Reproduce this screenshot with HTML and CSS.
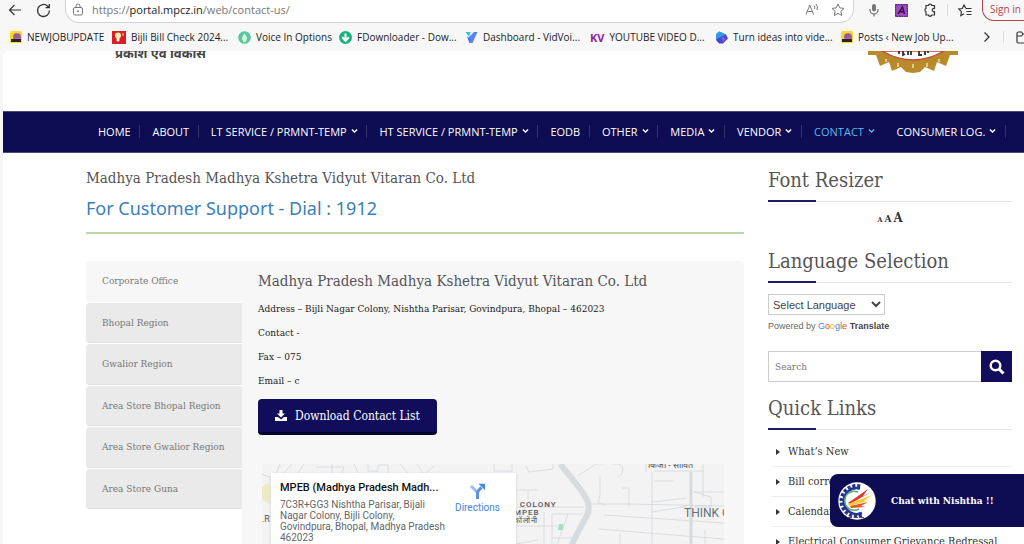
FILE: index.html
```html
<!DOCTYPE html>
<html lang="en">
<head>
<meta charset="utf-8">
<meta name="viewport" content="width=device-width, initial-scale=1">
<title>Contact Us</title>
<link rel="stylesheet" href="styles.css">
</head>
<body>
<svg class="sprite" aria-hidden="true">
  <symbol id="chev" viewBox="0 0 8 6"><path d="M1 1.2 4 4.2 7 1.2" fill="none" stroke="currentColor" stroke-width="1.6"/></symbol>
  <symbol id="jobs" viewBox="0 0 12 12"><rect width="12" height="12" rx="1.5" fill="#f2dc2a"/><path d="M3 5c0-2 2-3 4-3s4 1 4 3v3H3z" fill="#b06aa8"/><path d="M4 4h5M4 6h6" stroke="#7d4a88"/><path d="M1 8h10v3H1z" fill="#2b2418"/></symbol>
</svg>

<header class="browser">
  <div class="toolbar">
    <button class="tool" aria-label="Back"><svg width="14" height="14" viewBox="0 0 14 14"><path d="M13 7H1.500M6.500 2l-5 5 5 5" fill="none" stroke="#333" stroke-width="1.200"/></svg></button>
    <button class="tool" aria-label="Reload"><svg width="15" height="15" viewBox="0 0 15 15"><path d="M13.500 7.500a6 6 0 1 1-2-4.500l1.500 1.500M13.300 1v3.700H9.600" fill="none" stroke="#333" stroke-width="1.300"/></svg></button>
    <div class="address">
      <svg width="12" height="13" viewBox="0 0 12 13"><rect x="1.500" y="4.500" width="9" height="7.500" rx="1.500" fill="none" stroke="#777"/><path d="M4 4.500V3a2 2 0 0 1 4 0v1.500" fill="none" stroke="#777"/><circle cx="6" cy="8.200" r=".9" fill="#777"/></svg>
      <a class="url" href="#">https://<b>portal.mpcz.in</b>/web/contact-us/</a>
      <button class="tool" aria-label="Read aloud"><svg width="14" height="13" viewBox="0 0 14 13"><path d="M1 11.500 4.800 2l3.800 9.500M2.300 8.500h5M9 2.500q1.300 1.500.6 3.500M11 1q2.400 2.600.9 6" fill="none" stroke="#777"/></svg></button>
      <button class="tool" aria-label="Add to favorites"><svg width="14" height="14" viewBox="0 0 14 14"><path d="m7 1 1.800 3.900 4.200.5-3.100 2.900.8 4.200L7 10.400l-3.700 2.100.8-4.200L1 5.400l4.200-.5z" fill="none" stroke="#777"/></svg></button>
    </div>
    <div class="extensions">
      <button class="tool" aria-label="Microphone"><svg width="12" height="14" viewBox="0 0 12 14"><rect x="4" y="1" width="4" height="7.500" rx="2" fill="#777"/><path d="M2 6v1a4 4 0 0 0 8 0V6M6 11v2.500" fill="none" stroke="#777" stroke-width="1.300"/></svg></button>
      <button class="tool" aria-label="Font extension"><svg width="13" height="13" viewBox="0 0 13 13"><rect width="13" height="13" fill="#a24cc4"/><rect x=".7" y=".7" width="11.600" height="11.600" fill="none" stroke="#4b1768" stroke-dasharray="1.500 1"/><path d="m3 10 4.500-7L9.500 10M5 7.800h4" fill="none" stroke="#35104a" stroke-width="1.400"/></svg></button>
      <button class="tool" aria-label="Extensions"><svg width="14" height="14" viewBox="0 0 14 14"><path d="M3 2.500h2.500a1.700 1.700 0 0 1 3.300 0H11.500V5.500a1.700 1.700 0 1 0 0 3.200v3.300H8.800a1.700 1.700 0 0 1-3.300 0H3V8.700a1.700 1.700 0 0 1 0-3.200z" fill="none" stroke="#333" stroke-width="1.200"/></svg></button>
      <span class="rule"></span>
      <button class="tool" aria-label="Favorites"><svg width="14" height="13" viewBox="0 0 14 13"><path d="M8 4.500 6 .9 4.300 4.500.8 5l2.600 2.600-.6 4L6 9.800M8 4.500h5.500M8.500 7.500h5M8.500 10.500h5" fill="none" stroke="#333" stroke-width="1.100"/></svg></button>
      <button class="signin">Sign in</button>
    </div>
  </div>
  <nav class="bookmarks" aria-label="Bookmarks">
    <a href="#"><svg width="12" height="12"><use href="#jobs"/></svg>NEWJOBUPDATE</a>
    <a href="#"><svg width="14" height="13" viewBox="0 0 14 13"><rect width="14" height="13" fill="#d91e25"/><circle cx="6" cy="4.500" r="3" fill="#fff0a8"/><path d="M5 7h2v3H5zM11 2v3" fill="#fff" stroke="#fff" stroke-width=".8"/></svg>Bijli Bill Check 2024...</a>
    <a href="#"><svg width="13" height="13" viewBox="0 0 13 13"><circle cx="6.500" cy="6.500" r="6.300" fill="#58c6a2"/><path d="M6.500 2.500C8 4.500 9 5.500 9 7.500a2.500 2.500 0 0 1-5 0c0-2 1-3 2.500-5" fill="#d7f4e1"/><path d="M5 9h3v2H5z" fill="#f4e7a0"/></svg>Voice In Options</a>
    <a href="#"><svg width="13" height="13" viewBox="0 0 13 13"><circle cx="6.500" cy="6.500" r="6.500" fill="#19b27b"/><path d="M6.500 2.500v7M3.200 6.200l3.300 3.500 3.300-3.500" fill="none" stroke="#fff" stroke-width="2"/></svg>FDownloader - Dow...</a>
    <a href="#"><svg width="13" height="13" viewBox="0 0 13 13"><path d="M.5 1h5.200L4 5.500z" fill="#28c6d4"/><path d="M12.500 1H9L3 7l1.500 5h3z" fill="#5b83f1"/><path d="m2 5.500 3.500 2L4.500 12z" fill="#536be8"/></svg>Dashboard - VidVoi...</a>
    <a href="#"><span class="kv">KV</span>YOUTUBE VIDEO D...</a>
    <a href="#"><svg width="13" height="13" viewBox="0 0 13 13"><path d="m4 .5 7 3 2 4-5 5H4L1 9z" fill="#4c45cf"/><path d="M4 .5 1 3v5l5-2 5-2.500z" fill="#329be6"/><path d="m6 6 5 1-3 4z" fill="#7a60e2"/></svg>Turn ideas into vide...</a>
    <a href="#"><svg width="12" height="12"><use href="#jobs"/></svg>Posts ‹ New Job Up...</a>
    <div class="more">
      <button class="tool" aria-label="More bookmarks"><svg width="8" height="12" viewBox="0 0 8 12"><path d="m1.500 1.500 4.500 4.500-4.500 4.500" fill="none" stroke="#333" stroke-width="1.300"/></svg></button>
      <span class="rule"></span>
      <button class="tool" aria-label="Other favorites"><svg width="14" height="13" viewBox="0 0 14 13"><path d="M14 3H7L5.500 1H2.500Q1 1 1 2.500v8Q1 12 2.500 12H14M1 5h4.500L7 3" fill="none" stroke="#333" stroke-width="1.200"/></svg></button>
    </div>
  </nav>
</header>

<div class="page">
  <div class="masthead">
    <div class="tagline" lang="hi">प्रकाश एवं विकास</div>
    <svg class="emblem" width="90" height="72" viewBox="0 0 90 72">
      <path d="M0 50h90v4H82l-4 11-9-4-3 9-9-4-5 5-7 1-7-1-5-5-9 4-3-9-9 4-4-11H0z" fill="#b98a2c"/>
      <path d="M14 50Q45 68 76 50z" fill="#fff" stroke="#c14b35" stroke-width="1.300"/>
      <path d="M18 58v3M30 62v4M45 63v4M59 62v4M71 58v3" stroke="#f1dfae" stroke-width="1.500"/>
      <path d="M31 50v3M35 50v4l2-1M40 50v4M43 50v4M51 50v4h3M57 50v4M60 50v2" stroke="#333" stroke-width="1.800" fill="none"/>
    </svg>
  </div>

  <nav class="menu" aria-label="Main">
    <ul>
      <li><a href="#">HOME</a></li>
      <li><a href="#">ABOUT</a></li>
      <li><a href="#">LT SERVICE / PRMNT-TEMP<svg><use href="#chev"/></svg></a></li>
      <li><a href="#">HT SERVICE / PRMNT-TEMP<svg><use href="#chev"/></svg></a></li>
      <li><a href="#">EODB</a></li>
      <li><a href="#">OTHER<svg><use href="#chev"/></svg></a></li>
      <li><a href="#">MEDIA<svg><use href="#chev"/></svg></a></li>
      <li><a href="#">VENDOR<svg><use href="#chev"/></svg></a></li>
      <li class="active"><a href="#">CONTACT<svg><use href="#chev"/></svg></a></li>
      <li><a href="#">CONSUMER LOG.<svg><use href="#chev"/></svg></a></li>
    </ul>
  </nav>

  <div class="content">
    <main>
      <h1>Madhya Pradesh Madhya Kshetra Vidyut Vitaran Co. Ltd</h1>
      <p class="support"><a href="#">For Customer Support - Dial : 1912</a></p>
      <div class="offices">
        <div class="tabs" role="tablist">
          <button role="tab" aria-selected="true">Corporate Office</button>
          <button role="tab" aria-selected="false">Bhopal Region</button>
          <button role="tab" aria-selected="false">Gwalior Region</button>
          <button role="tab" aria-selected="false">Area Store Bhopal Region</button>
          <button role="tab" aria-selected="false">Area Store Gwalior Region</button>
          <button role="tab" aria-selected="false">Area Store Guna</button>
        </div>
        <section class="panel" role="tabpanel">
          <h2>Madhya Pradesh Madhya Kshetra Vidyut Vitaran Co. Ltd</h2>
          <p>Address – Bijli Nagar Colony, Nishtha Parisar, Govindpura, Bhopal – 462023</p>
          <p>Contact -</p>
          <p class="cut">Fax – 075</p>
          <p class="cut">Email – c</p>
          <button class="download"><svg width="12" height="11" viewBox="0 0 12 11"><path d="M4.500 0h3v3.500H10L6 7.500 2 3.500h2.500zM0 7h3l3 2.500L9 7h3v4H0z" fill="#fff"/></svg>Download Contact List</button>
          <div class="map">
            <svg class="streets" viewBox="0 0 462 100" preserveAspectRatio="xMinYMin slice">
              <rect width="462" height="100" fill="#f3f3f4"/>
              <path d="M0 23l6-4 5 7-3 14-8-4z" fill="#eeeac8"/>
              <path d="M0 10l12 5 6-15M22 9l8-9M42 0l-6 9M54 3h28l-2 6M70 0v9M92 0l4 9M106 0v7h10V1h10v8M138 0l8 9M155 0l6 9M172 2l-8 7M232 0v7h18V0M264 2l3 6 24-3V0M254 26h22M266 26v10M254 43h68M254 62h42M282 48v52M290 50v50M290 50h31M306 50l-18 50M290 74h22M254 80l22-4M325 40h40l97 2M342 51l120 8M336 65l126 10M358 70v30M316 12l18-12 22-1M338 13v18l-2 8 8 2M350 0q14-2 10 10l-4 3M384 0v8M390 8v92M390 48l36-6M390 38l35-4M432 28l17 5v10h-17M441 0v34M432 28h30M392 7h50M392 17h20M443 66v14M367 24v18M360 24h7M398 0v4" fill="none" stroke="#d9dcdf"/>
              <path d="M429 8v92" stroke="#d7dadd" stroke-width="3"/>
              <path d="M298 0q22 26 26 34 6 10-1 21-8 14-15 30l-9 18" fill="none" stroke="#d9dcdf" stroke-width="6"/>
              <path d="M297 60h4v6h-5z" fill="#a4dfc4"/>
            </svg>
            <span class="place road" lang="hi">किजा - सावित</span>
            <span class="place colony">S COLONY</span>
            <span class="place mpeb">MPEB<br><span lang="hi">कॉलोनी</span></span>
            <span class="place gas">THINK G</span>
            <span class="place edge">.R</span>
            <div class="card">
              <div class="where"><strong>MPEB (Madhya Pradesh Madh...</strong><address>7C3R+GG3 Nishtha Parisar, Bijali Nagar Colony, Bijli Colony, Govindpura, Bhopal, Madhya Pradesh 462023</address></div>
              <a class="directions" href="#"><svg width="16" height="16" viewBox="0 0 16 16"><path d="M1 3 7 9" fill="none" stroke="#9abcf0" stroke-width="3"/><path d="M7.500 16v-6q0-2 4-5.500" fill="none" stroke="#5b92e2" stroke-width="3"/><path d="M8.500.8H15v6.500z" fill="#4b88df"/></svg>Directions</a>
            </div>
          </div>
        </section>
      </div>
    </main>

    <aside>
      <h3>Font Resizer</h3>
      <div class="resizer"><a class="small" href="#">A</a> <a class="medium" href="#">A</a> <a class="large" href="#">A</a></div>
      <h3>Language Selection</h3>
      <select aria-label="Select Language"><option>Select Language</option></select>
      <div class="powered">Powered by <span class="google"><i>G</i><i>o</i><i>o</i><i>g</i><i>l</i><i>e</i></span> <b>Translate</b></div>
      <form class="search">
        <input type="search" placeholder="Search" aria-label="Search">
        <button type="button" aria-label="Submit search"><svg width="16" height="16" viewBox="0 0 16 16"><circle cx="6.500" cy="6.500" r="4.800" fill="none" stroke="#fff" stroke-width="2.400"/><path d="m10 10 4.500 4.500" stroke="#fff" stroke-width="3"/></svg></button>
      </form>
      <h3>Quick Links</h3>
      <ul class="links">
        <li><a href="#">What’s New</a></li>
        <li><a href="#">Bill correction</a></li>
        <li><a href="#">Calendar</a></li>
        <li><a href="#">Electrical Consumer Grievance Redressal</a></li>
      </ul>
    </aside>
  </div>
</div>

<button class="chat">
  <svg width="38" height="38" viewBox="0 0 38 38">
    <circle cx="19" cy="19" r="18.700" fill="#fff"/>
    <path d="M22 5A14.500 14.500 0 1 0 24 32.500" fill="none" stroke="#27358f" stroke-width="5" stroke-dasharray="3 1.600"/>
    <path d="M22 6.500A13 13 0 1 0 24 31" fill="none" stroke="#27358f" stroke-width="2.500"/>
    <path d="M20 10a9.500 9.500 0 1 0 1 17" fill="none" stroke="#55ad75" stroke-width="1.500"/>
    <path d="m10 21 20-14-5 7 8-4-21 12z" fill="#df382d"/>
    <path d="m10 22 24-9-8 6 7-1-21 6z" fill="#f1cd37"/>
    <path d="m12 24 18-4-7 4 5 1-15 1z" fill="#e0592f"/>
    <path d="M10 35.500h18" stroke="#555" stroke-dasharray="4 2"/>
  </svg>
  <span>Chat with Nishtha !!</span>
</button>
</body>
</html>
```
FILE: styles.css
```css
* { box-sizing: border-box; }
html, body { height: 100%; }
body {
  margin: 0;
  overflow: hidden;
  display: flex;
  flex-direction: column;
  background: #f7f7f8;
  color: #333;
  font-family: "DejaVu Serif Condensed", "DejaVu Serif", serif;
}
a { color: inherit; text-decoration: none; }
button { font: inherit; color: inherit; border: 0; padding: 0; background: none; }
h1, h2, h3, p, ul { margin: 0; padding: 0; font-weight: 400; }
ul { list-style: none; }
svg { flex: none; }
.sprite { position: absolute; width: 0; height: 0; }

/* Browser bars */
.browser { flex: none; font: 10px "Open Sans", sans-serif; color: #222; }
.toolbar { display: flex; height: 23px; padding-left: 8px; gap: 14px; }
.tool { display: flex; align-items: center; height: 20px; }
.address {
  flex: 1;
  display: flex;
  align-items: center;
  gap: 12px;
  height: 23px;
  padding: 0 8px 3px 6px;
  border: 1px solid #d2d2d4;
  border-top: 0;
  border-radius: 0 0 14px 14px;
  background: #fff;
}
.url { flex: 1; margin-left: -4px; font-size: 11px; color: #777; }
.url b { font-weight: 400; color: #222; }
.extensions { display: flex; gap: 15px; height: 20px; align-items: center; }
.extensions .rule { margin: 0 -5px; }
.rule { width: 1px; height: 12px; background: #ddd; }
.signin {
  height: 22px;
  width: 48px;
  margin: 0 -6px 0 -5px;
  padding: 0 8px 2px 7px;
  border: 1px solid #b8434c;
  border-top: 0;
  border-radius: 0 0 0 12px;
  color: #b8434c;
  white-space: nowrap;
}
.bookmarks {
  display: grid;
  grid-template-columns: 102px 126px 101px 126px 125px 125px 126px 135px 1fr;
  align-items: center;
  height: 28px;
  padding-left: 10px;
}
.bookmarks a { display: flex; align-items: center; gap: 5px; white-space: nowrap; }
.kv { color: #98209b; font-size: 11px; line-height: 13px; font-weight: 700; }
.more { display: flex; align-items: center; gap: 12px; justify-content: flex-end; overflow: hidden; margin-right: -6px; }

/* Web page */
.page {
  flex: 1;
  min-height: 0;
  overflow: hidden;
  margin-left: 3px;
  border-top-left-radius: 6px;
  background: #fff;
}
.masthead {
  display: flex;
  justify-content: space-between;
  align-items: flex-start;
  height: 60px;
  padding: 0 66px 0 112px;
  overflow: hidden;
}
.tagline { margin-top: -7px; font: 700 13px/18px "Noto Sans", sans-serif; color: #444; }
.emblem { margin-top: -50px; }
.menu { background: #0d0b52; border: 1px solid #4d4b78; border-width: 1px 0; padding: 0 18px 0 83px; }
.menu ul { display: flex; height: 40px; padding-bottom: 2px; align-items: center; }
.menu li { flex: auto; border-right: 1px solid #34336b; padding-left: 12px; }
.menu li.active { border-color: transparent; }
.menu a { display: flex; align-items: center; gap: 4px; font: 500 11px/13px "Open Sans", sans-serif; color: #fff; white-space: nowrap; }
.menu svg { width: 7px; height: 6px; }
.menu .active a { color: #5cb8ea; }

.content { display: grid; grid-template-columns: minmax(0, 1fr) 244px; gap: 24px; padding: 13px 12px 0 83px; }
h1, h2 { font-size: 15px; line-height: 24px; color: #555; white-space: nowrap; }
.support {
  margin-top: 4px;
  padding-bottom: 9px;
  border-bottom: 2px solid #bbd7a4;
  font: 18px/29px "Noto Sans", sans-serif;
  color: #3b80b9;
}
.offices { display: grid; grid-template-columns: 156px minmax(0, 1fr); align-items: start; margin-top: 27px; }
.tabs { display: grid; grid-auto-rows: 1fr; gap: 1px; min-height: 248px; }
.tabs button {
  padding: 0 16px;
  border-radius: 4px 0 0 4px;
  border-bottom: 1px solid #e2e2e2;
  background: #eaeaea;
  color: #777;
  font-size: 10px;
  text-align: left;
  white-space: nowrap;
}
.tabs [aria-selected="true"] { background: #f7f7f7; border-color: #f7f7f7; }
.panel { padding: 8px 16px 80px; background: #f7f7f7; border-radius: 0 4px 4px 0; }
.panel p { font-size: 10px; line-height: 16px; margin-top: 8px; color: #222; white-space: nowrap; }
.panel .cut { width: 43px; overflow: hidden; }
.download {
  display: flex;
  align-items: center;
  justify-content: center;
  gap: 8px;
  width: 179px;
  height: 36px;
  margin-top: 10px;
  border-radius: 4px;
  border-bottom: 3px solid #05042f;
  background: #110d5a;
  color: #fff;
  font-size: 12px;
}
.map { position: relative; margin: 29px 4px 0; height: 100px; overflow: hidden; font-family: Roboto, sans-serif; }
.streets { display: block; width: 100%; height: 100px; }
.place { position: absolute; color: #555; white-space: nowrap; }
.road { left: 386px; top: -6px; font-size: 9px; }
.colony, .mpeb { font-weight: 500; font-size: 8px; line-height: 8px; letter-spacing: 1px; }
.colony { left: 249px; top: 37px; }
.mpeb { left: 252px; top: 45px; }
.gas { left: 422px; top: 42px; font-size: 12px; color: #607078; }
.edge { left: 0; top: 50px; font-size: 9px; }
.card {
  position: absolute;
  left: 9px;
  top: 9px;
  width: 245px;
  display: flex;
  justify-content: space-between;
  padding: 8px 16px 8px 9px;
  background: #fff;
  box-shadow: 0 1px 3px #ccc;
}
.where { width: 166px; }
.where strong { display: block; font-size: 11px; line-height: 14px; font-weight: 500; color: #111; white-space: nowrap; }
.where address { margin-top: 4px; font-style: normal; font-size: 10px; line-height: 11px; color: #666; }
.directions { display: flex; flex-direction: column; align-items: center; gap: 3px; padding-top: 2px; font-size: 10px; color: #4385d8; }

/* Sidebar */
aside h3 {
  position: relative;
  height: 36px;
  border-bottom: 1px solid #e5e5e5;
  font-size: 20px;
  line-height: 28px;
  color: #555;
  white-space: nowrap;
}
aside h3::after { content: ""; position: absolute; left: 0; bottom: -1px; width: 48px; height: 2px; background: #201b68; }
.resizer { display: flex; justify-content: center; align-items: baseline; gap: 2px; height: 45px; padding-top: 8px; font-weight: 700; line-height: 16px; }
.small { font-size: 7px; }
.medium { font-size: 10px; }
.large { font-size: 13px; }
select {
  display: block;
  width: 117px;
  height: 21px;
  margin-top: 11px;
  border: 1px solid #ccc;
  border-radius: 0;
  background: #fff;
  color: #444;
  font: 11px "Liberation Sans", sans-serif;
}
.powered { margin-top: 3px; font: 9px/16px "Liberation Sans", sans-serif; color: #666; }
.powered b { color: #444; }
.google i { font-style: normal; color: #4285f4; }
.google i:nth-child(2), .google i:nth-child(6) { color: #ea4335; }
.google i:nth-child(3) { color: #fbbc05; }
.google i:nth-child(5) { color: #34a853; }
.search { display: flex; height: 31px; margin: 17px 0 12px; }
.search input {
  flex: 1;
  min-width: 0;
  padding: 0 6px;
  border: 1px solid #ccc;
  border-right: 0;
  border-radius: 0;
  background: #fff;
  font: inherit;
  font-size: 10px;
}
.search input::placeholder { color: #777; }
.search button { display: flex; align-items: center; justify-content: center; width: 31px; background: #110d5a; }
.links { padding: 7px 0 0 4px; }
.links li { display: flex; align-items: center; gap: 8px; height: 30px; padding-left: 4px; border-bottom: 1px solid #eee; font-size: 11px; white-space: nowrap; }
.links li::before { content: ""; border: 3px solid transparent; border-left: 4px solid #333; border-right: 0; }

.chat {
  position: fixed;
  right: 0;
  bottom: 17px;
  display: flex;
  align-items: center;
  gap: 15px;
  width: 194px;
  height: 53px;
  padding: 0 8px;
  border-radius: 8px 0 0 8px;
  background: #0d0b52;
  color: #fff;
  font-weight: 700;
  font-size: 10px;
  white-space: nowrap;
}
```
